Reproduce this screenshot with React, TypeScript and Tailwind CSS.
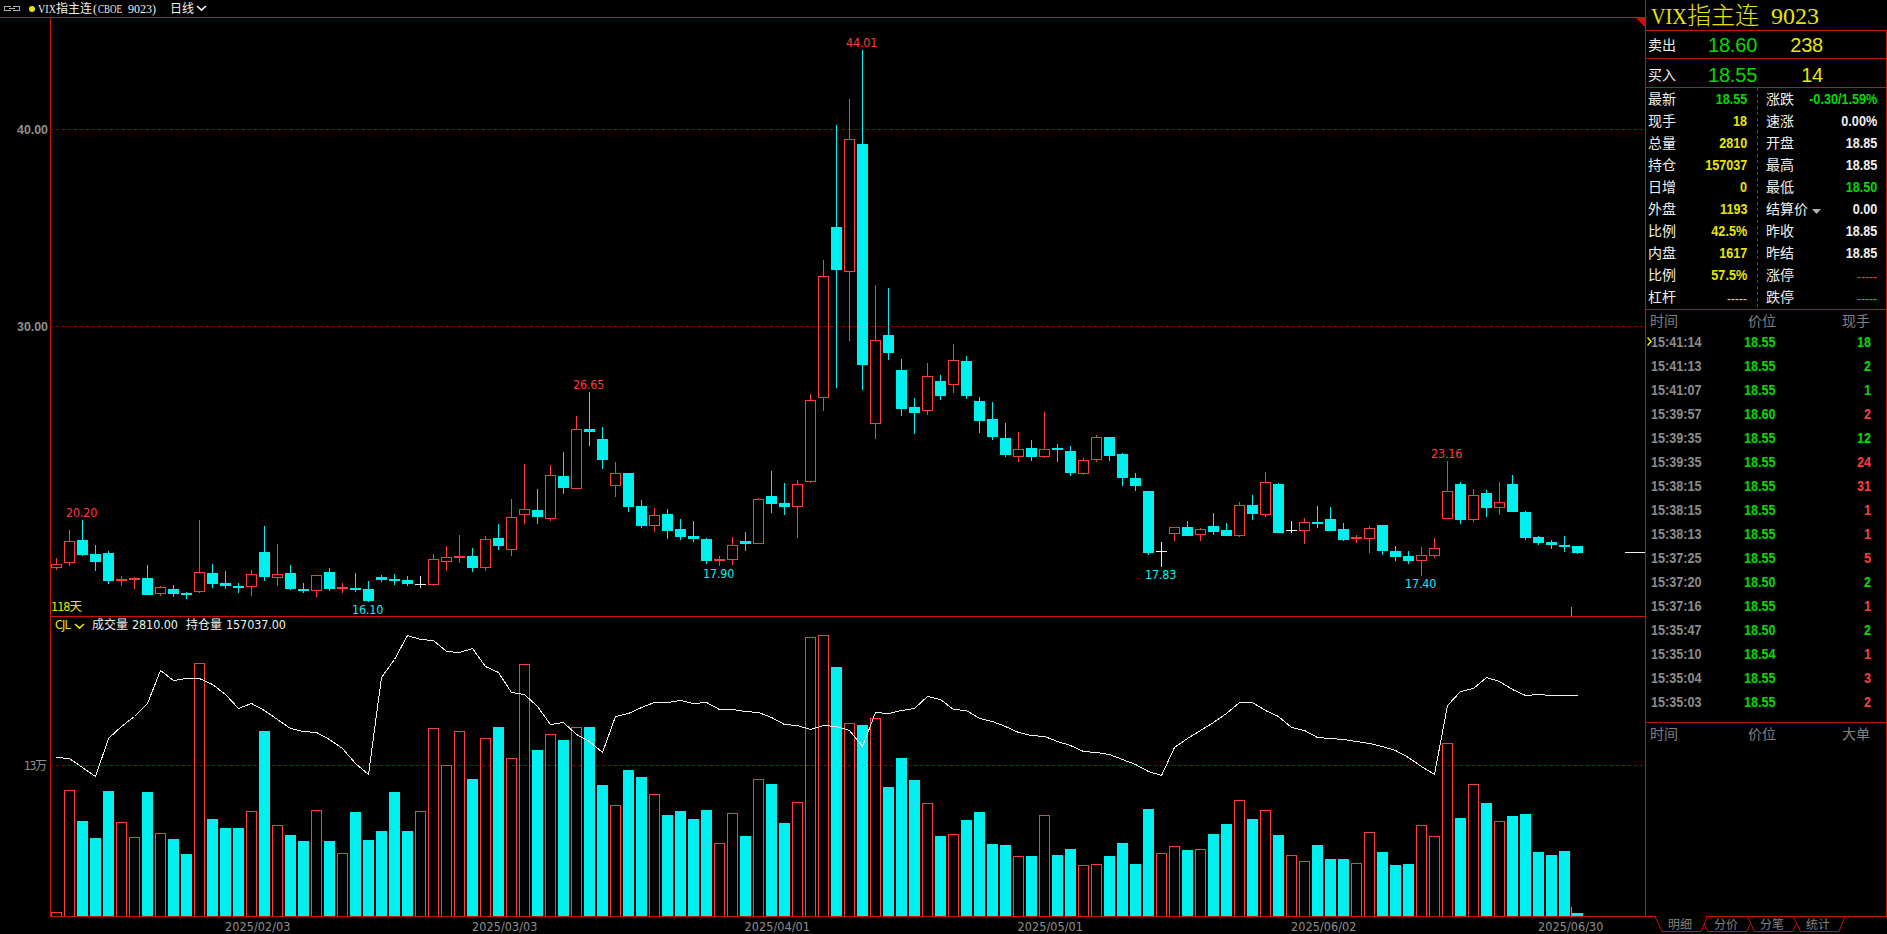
import React from 'react';

type Kind = 'up' | 'down' | 'flat';
// kind, high, body top, body bottom, low, volume top, open interest
type Bar = [Kind, number, number, number, number, number, number];

const bars: Bar[] = [
  ['up', 558, 564, 568, 570, 912, 757],
  ['up', 530, 541, 563, 566, 790, 758],
  ['down', 520, 540, 555, 556, 821, 767],
  ['down', 545, 554, 562, 571, 838, 776],
  ['down', 551, 553, 581, 584, 791, 738],
  ['up', 576, 579, 581, 586, 822, 726],
  ['up', 577, 578, 580, 589, 837, 716],
  ['down', 565, 578, 595, 595, 792, 703],
  ['up', 586, 587, 594, 596, 833, 670],
  ['down', 585, 589, 594, 597, 839, 680],
  ['down', 592, 593, 595, 599, 854, 678],
  ['up', 520, 572, 592, 593, 663, 678],
  ['down', 564, 573, 584, 588, 819, 684],
  ['down', 571, 583, 586, 589, 828, 694],
  ['down', 583, 586, 588, 593, 828, 708],
  ['up', 570, 574, 587, 596, 811, 703],
  ['down', 526, 552, 577, 581, 731, 710],
  ['up', 544, 574, 578, 586, 825, 719],
  ['down', 565, 573, 589, 590, 835, 728],
  ['down', 583, 589, 591, 593, 841, 731],
  ['up', 575, 575, 591, 597, 810, 732],
  ['down', 568, 572, 589, 591, 841, 739],
  ['up', 583, 587, 589, 593, 853, 748],
  ['down', 573, 588, 590, 592, 812, 763],
  ['down', 581, 589, 601, 602, 840, 774],
  ['down', 575, 577, 580, 582, 831, 677],
  ['down', 574, 579, 581, 585, 792, 659],
  ['down', 576, 580, 584, 586, 831, 635],
  ['flat', 576, 584, 585, 588, 811, 639],
  ['up', 554, 559, 585, 586, 728, 640],
  ['up', 546, 557, 562, 571, 765, 651],
  ['up', 535, 556, 558, 563, 731, 652],
  ['down', 548, 556, 568, 572, 779, 648],
  ['up', 536, 539, 568, 571, 738, 666],
  ['down', 524, 538, 546, 550, 727, 672],
  ['up', 499, 517, 550, 556, 758, 692],
  ['up', 464, 509, 515, 524, 664, 694],
  ['down', 489, 510, 517, 524, 750, 706],
  ['up', 465, 475, 519, 521, 734, 724],
  ['down', 452, 476, 488, 494, 740, 722],
  ['up', 416, 429, 489, 489, 727, 734],
  ['down', 392, 429, 432, 446, 727, 741],
  ['down', 427, 439, 460, 469, 785, 752],
  ['up', 462, 473, 486, 497, 805, 716],
  ['down', 473, 473, 507, 512, 770, 713],
  ['down', 500, 506, 526, 528, 777, 707],
  ['up', 508, 515, 526, 532, 794, 702],
  ['down', 509, 514, 531, 539, 815, 702],
  ['down', 519, 529, 537, 540, 811, 700],
  ['down', 521, 536, 539, 542, 819, 703],
  ['down', 538, 539, 561, 564, 810, 702],
  ['up', 556, 559, 561, 566, 843, 709],
  ['up', 537, 545, 560, 565, 813, 709],
  ['down', 532, 541, 544, 551, 836, 711],
  ['up', 498, 499, 544, 544, 779, 712],
  ['down', 471, 496, 504, 513, 784, 717],
  ['down', 483, 503, 507, 515, 823, 724],
  ['up', 480, 484, 507, 538, 802, 725],
  ['up', 394, 400, 482, 483, 637, 729],
  ['up', 260, 276, 398, 411, 635, 725],
  ['down', 125, 227, 270, 388, 667, 726],
  ['up', 99, 139, 272, 341, 723, 730],
  ['down', 50, 144, 365, 390, 725, 746],
  ['up', 285, 340, 424, 439, 718, 712],
  ['down', 288, 335, 353, 360, 787, 713],
  ['down', 359, 370, 409, 416, 758, 710],
  ['down', 398, 407, 413, 434, 780, 708],
  ['up', 363, 376, 411, 415, 803, 696],
  ['down', 375, 381, 396, 400, 836, 699],
  ['up', 344, 360, 385, 393, 834, 709],
  ['down', 356, 361, 396, 399, 820, 710],
  ['down', 397, 401, 421, 433, 812, 718],
  ['down', 402, 419, 437, 440, 844, 721],
  ['down', 423, 438, 455, 457, 845, 726],
  ['up', 432, 449, 457, 462, 856, 732],
  ['down', 440, 448, 457, 461, 856, 735],
  ['up', 412, 449, 457, 458, 815, 736],
  ['down', 444, 448, 450, 462, 855, 741],
  ['down', 446, 451, 473, 476, 849, 745],
  ['up', 458, 460, 474, 475, 865, 751],
  ['up', 435, 437, 460, 462, 864, 752],
  ['down', 437, 437, 456, 461, 856, 754],
  ['down', 453, 454, 478, 486, 843, 759],
  ['down', 473, 478, 486, 491, 864, 764],
  ['down', 491, 491, 553, 555, 809, 771],
  ['flat', 542, 551, 552, 567, 853, 775],
  ['up', 527, 527, 534, 541, 846, 747],
  ['down', 521, 527, 536, 536, 850, 738],
  ['up', 528, 529, 535, 541, 849, 730],
  ['down', 513, 526, 532, 535, 834, 722],
  ['down', 523, 530, 536, 536, 824, 713],
  ['up', 502, 505, 536, 537, 800, 702],
  ['down', 495, 505, 514, 520, 819, 702],
  ['up', 472, 482, 515, 517, 810, 710],
  ['down', 483, 484, 533, 533, 835, 716],
  ['flat', 521, 530, 531, 533, 855, 727],
  ['up', 518, 522, 531, 544, 861, 730],
  ['down', 506, 522, 524, 528, 845, 737],
  ['down', 507, 519, 531, 531, 859, 738],
  ['down', 523, 529, 540, 541, 859, 739],
  ['up', 535, 537, 539, 543, 863, 741],
  ['up', 526, 528, 539, 553, 832, 743],
  ['down', 525, 525, 551, 555, 852, 746],
  ['down', 546, 551, 557, 561, 865, 750],
  ['down', 551, 556, 561, 564, 864, 757],
  ['up', 547, 555, 561, 576, 825, 766],
  ['up', 538, 548, 556, 558, 836, 774],
  ['up', 461, 491, 519, 519, 743, 705],
  ['down', 482, 484, 520, 524, 818, 691],
  ['up', 489, 495, 520, 522, 784, 688],
  ['down', 490, 493, 508, 517, 803, 677],
  ['up', 482, 502, 508, 515, 821, 681],
  ['down', 475, 484, 512, 512, 816, 689],
  ['down', 511, 512, 538, 540, 814, 695],
  ['down', 536, 537, 543, 545, 852, 694],
  ['down', 540, 542, 545, 549, 855, 695],
  ['down', 536, 545, 547, 552, 851, 695],
  ['down', 546, 546, 553, 554, 913, 695],
];

const colors: Record<Kind, string> = {
  up: '#ff3c3c',
  down: '#00f0f0',
  flat: '#f0f0f0',
};

const barX = (i: number) => 56 + i * 13;

const peaks = [
  { x: 82, y: 512, text: '20.20', high: true },
  { x: 368, y: 609, text: '16.10', high: false },
  { x: 589, y: 384, text: '26.65', high: true },
  { x: 719, y: 573, text: '17.90', high: false },
  { x: 862, y: 42, text: '44.01', high: true },
  { x: 1161, y: 574, text: '17.83', high: false },
  { x: 1447, y: 453, text: '23.16', high: true },
  { x: 1421, y: 583, text: '17.40', high: false },
];

const dates = [
  { x: 258, text: '2025/02/03' },
  { x: 505, text: '2025/03/03' },
  { x: 777.5, text: '2025/04/01' },
  { x: 1050.5, text: '2025/05/01' },
  { x: 1324, text: '2025/06/02' },
  { x: 1571, text: '2025/06/30' },
];

const leftQuotes = [
  { label: '最新', value: '18.55', color: 'text-[#00dc00]' },
  { label: '现手', value: '18', color: 'text-[#e6e600]' },
  { label: '总量', value: '2810', color: 'text-[#e6e600]' },
  { label: '持仓', value: '157037', color: 'text-[#e6e600]' },
  { label: '日增', value: '0', color: 'text-[#e6e600]' },
  { label: '外盘', value: '1193', color: 'text-[#e6e600]' },
  { label: '比例', value: '42.5%', color: 'text-[#e6e600]' },
  { label: '内盘', value: '1617', color: 'text-[#e6e600]' },
  { label: '比例', value: '57.5%', color: 'text-[#e6e600]' },
  { label: '杠杆', value: '-----', color: 'text-[#e6e600]' },
];

const rightQuotes = [
  { label: '涨跌', value: '-0.30/1.59%', color: 'text-[#00dc00]' },
  { label: '速涨', value: '0.00%', color: 'text-[#f0f0f0]' },
  { label: '开盘', value: '18.85', color: 'text-[#f0f0f0]' },
  { label: '最高', value: '18.85', color: 'text-[#f0f0f0]' },
  { label: '最低', value: '18.50', color: 'text-[#00dc00]' },
  { label: '结算价', value: '0.00', color: 'text-[#f0f0f0]', menu: true },
  { label: '昨收', value: '18.85', color: 'text-[#f0f0f0]' },
  { label: '昨结', value: '18.85', color: 'text-[#f0f0f0]' },
  { label: '涨停', value: '-----', color: 'text-[#ff3c3c]' },
  { label: '跌停', value: '-----', color: 'text-[#00dc00]' },
];

const trades = [
  { time: '15:41:14', price: '18.55', size: 18, buy: false },
  { time: '15:41:13', price: '18.55', size: 2, buy: false },
  { time: '15:41:07', price: '18.55', size: 1, buy: false },
  { time: '15:39:57', price: '18.60', size: 2, buy: true },
  { time: '15:39:35', price: '18.55', size: 12, buy: false },
  { time: '15:39:35', price: '18.55', size: 24, buy: true },
  { time: '15:38:15', price: '18.55', size: 31, buy: true },
  { time: '15:38:15', price: '18.55', size: 1, buy: true },
  { time: '15:38:13', price: '18.55', size: 1, buy: true },
  { time: '15:37:25', price: '18.55', size: 5, buy: true },
  { time: '15:37:20', price: '18.50', size: 2, buy: false },
  { time: '15:37:16', price: '18.55', size: 1, buy: true },
  { time: '15:35:47', price: '18.50', size: 2, buy: false },
  { time: '15:35:10', price: '18.54', size: 1, buy: true },
  { time: '15:35:04', price: '18.55', size: 3, buy: true },
  { time: '15:35:03', price: '18.55', size: 2, buy: true },
];

const chartFont = "font-['DejaVu_Sans_Condensed','DejaVu_Sans','Noto_Sans_CJK_SC',sans-serif] [font-stretch:condensed]";
const numFont = "inline-block font-['Liberation_Sans','Noto_Sans_CJK_SC',sans-serif] text-[14.5px] leading-5 font-bold scale-x-[0.87]";

function Box({ x, top, bottom, kind }: { x: number; top: number; bottom: number; kind: Kind }) {
  if (kind === 'up' && bottom - top > 2) {
    return (
      <rect x={x - 4.5} y={top + 0.5} width={10} height={bottom - top - 1} fill="none" stroke={colors.up} />
    );
  }
  return <rect x={x - 5} y={top} width={11} height={bottom - top} fill={colors[kind]} />;
}

function GridLine({ y }: { y: number }) {
  return <line x1={50} x2={1645} y1={y + 0.5} y2={y + 0.5} stroke="#8c0000" strokeDasharray="3 3" />;
}

function Chevron({ className }: { className: string }) {
  return (
    <svg width="11" height="7" viewBox="0 0 11 7" className={className} fill="none" stroke="currentColor" strokeWidth="1.6">
      <path d="M1 1 L5.5 5.2 L10 1" />
    </svg>
  );
}

function PriceChart() {
  return (
    <svg width="1645" height="599" viewBox="0 17 1645 599" className={`block ${chartFont}`} shapeRendering="crispEdges">
      <rect x="0" y="17" width="1645" height="1" fill="#c81408" />
      <rect x="50" y="17" width="1" height="599" fill="#c81408" />
      <GridLine y={129} />
      <GridLine y={326} />
      {bars.map(([kind, high, top, bottom, low], i) => (
        <g key={i}>
          <rect x={barX(i)} y={high} width={1} height={top - high} fill={colors[kind]} />
          <rect x={barX(i)} y={bottom} width={1} height={low - bottom} fill={colors[kind]} />
          <Box x={barX(i)} top={top} bottom={bottom} kind={kind} />
        </g>
      ))}
      <rect x="1625" y="552" width="20" height="1" fill="#f0f0f0" />
      <rect x="1571" y="607" width="1" height="9" fill="#909090" />
      <path d="M1635 17 H1645 V27 Z" fill="#c81408" shapeRendering="auto" />
      {peaks.map((p) => (
        <text
          key={p.text}
          x={p.x - 16}
          y={p.y + 4.5}
          textLength={31.5}
          fontSize="12.5"
          fill={p.high ? '#ff3c3c' : '#00f0f0'}
        >
          {p.text}
        </text>
      ))}
      <g fill="#909090" fontSize="12.5" fontWeight="bold" className="font-['Liberation_Sans',sans-serif]">
        <text x="17" y="133.5" textLength="31" lengthAdjust="spacingAndGlyphs">40.00</text>
        <text x="17" y="330.5" textLength="31" lengthAdjust="spacingAndGlyphs">30.00</text>
      </g>
      <text x="51" y="611" fontSize="12.5" fill="#e6e600" textLength="31">118天</text>
    </svg>
  );
}

function VolumeChart() {
  const line = bars.map((b, i) => `${barX(i) + 0.5},${b[6] + 0.5}`).join(' ');
  return (
    <div className="relative">
      <svg width="1645" height="301" viewBox="0 616 1645 301" className="block" shapeRendering="crispEdges">
        <rect x="50" y="616" width="1595" height="1" fill="#c81408" />
        <rect x="50" y="616" width="1" height="301" fill="#c81408" />
        <GridLine y={765} />
        {bars.map((b, i) => (
          <Box key={i} x={barX(i)} top={b[5]} bottom={917} kind={b[0] === 'down' ? 'down' : 'up'} />
        ))}
        <polyline points={line} fill="none" stroke="#f0f0f0" />
        <rect x="50" y="916" width="1595" height="1" fill="#c81408" />
        <rect x="1571" y="907" width="1" height="10" fill="#909090" />
        <text x="24" y="769.5" fontSize="12" fill="#909090" textLength="23" className={chartFont}>
          13万
        </text>
      </svg>
      <div className={`absolute top-[1px] left-[55px] flex h-4 items-center text-[12.5px] leading-4 text-[#f0f0f0] ${chartFont}`}>
        <span className="w-[20px] tracking-[-0.8px] text-[#e6e600]">CJL</span>
        <Chevron className="mt-0.5 -ml-px mr-[7px] text-[#e6e600]" />
        <span className="w-10 text-[12px]">成交量</span>
        <span className="w-[54px] tracking-[-0.1px]">2810.00</span>
        <span className="w-10 text-[12px]">持仓量</span>
        <span className="tracking-[-0.1px]">157037.00</span>
      </div>
    </div>
  );
}

function QuoteColumn({ rows, className }: { rows: { label: string; value: string; color: string; menu?: boolean }[]; className: string }) {
  return (
    <ul className={className}>
      {rows.map((row, i) => (
        <li key={i} className="flex h-[22px] items-center justify-between">
          <span className="flex items-center pb-0.5 text-sm leading-5 text-[#f0f0f0]">
            {row.label}
            {row.menu && (
              <svg width="9" height="5" viewBox="0 0 9 5" className="mt-1.5 ml-1">
                <path d="M0 0 H9 L4.5 5 Z" fill="#b0b0b0" />
              </svg>
            )}
          </span>
          {row.value === '-----' ? (
            <span className={`mt-1 font-['Liberation_Sans',sans-serif] text-xs ${row.color}`}>{row.value}</span>
          ) : (
            <span className={`origin-right ${numFont} ${row.color}`}>{row.value}</span>
          )}
        </li>
      ))}
    </ul>
  );
}

function ListHeader({ last }: { last: string }) {
  return (
    <div className="flex h-5 items-center pl-1 text-sm leading-5 text-[#808080]">
      <span className="w-[98px]">时间</span>
      <span className="w-[94px]">价位</span>
      <span>{last}</span>
    </div>
  );
}

function Sidebar() {
  return (
    <aside className="flex w-[242px] flex-col">
      <div className="flex h-[917px] flex-col border-l border-[#c81408]">
        <h1 className="flex h-[30px] items-center pt-px pl-[5px] text-[24px] leading-none font-light whitespace-pre text-[#e6e600] font-['Liberation_Serif','Noto_Sans_CJK_SC',serif]">
          <span className="inline-block w-9 origin-left scale-x-[0.84]">VIX</span>
          <span>指主连</span>
          <span className="ml-3">9023</span>
        </h1>
        <div className="flex grow flex-col border-t border-r border-b border-[#c81408]">
          {[
            { label: '卖出', price: '18.60', size: '238' },
            { label: '买入', price: '18.55', size: '14' },
          ].map((row, i) => (
            <div
              key={row.label}
              className={`flex items-center border-b border-[#c81408] pl-0.5 ${i === 0 ? 'h-7' : 'h-[29px] pt-[3px]'}`}
            >
              <span className="w-[60px] pb-0.5 text-sm text-[#f0f0f0]">{row.label}</span>
              <span className="w-[52px] text-[20px] tracking-[-0.2px] text-[#00dc00] font-['Liberation_Sans',sans-serif]">{row.price}</span>
              <span className="w-[63px] text-right text-[20px] tracking-[-0.2px] text-[#e6e600] font-['Liberation_Sans',sans-serif]">{row.size}</span>
            </div>
          ))}

          <div className="flex h-[222px] border-b border-[#c81408]">
            <QuoteColumn rows={leftQuotes} className="w-[101px] pl-0.5" />
            <svg width="1" height="219" className="ml-[10px]" shapeRendering="crispEdges">
              <line x1="0.5" x2="0.5" y1="0" y2="219" stroke="#c81408" strokeDasharray="3 3" />
            </svg>
            <QuoteColumn rows={rightQuotes} className="ml-2 w-[111px]" />
          </div>

          <div className="h-[413px] border-b border-[#c81408]">
            <ListHeader last="现手" />
            <ul>
              {trades.map((trade, i) => (
                <li key={i} className="relative flex h-6 items-center pl-[5px]">
                  {i === 0 && (
                    <svg width="5" height="9" viewBox="0 0 5 9" className="absolute top-[7px] left-[1px]" fill="none" stroke="#f0f000" strokeWidth="1.4">
                      <path d="M0.5 0.5 L4 4.5 L0.5 8.5" />
                    </svg>
                  )}
                  <span className={`w-[93px] origin-left text-[#8c8c8c] ${numFont}`}>{trade.time}</span>
                  <span className={`w-[33px] origin-left text-[#00dc00] ${numFont}`}>{trade.price}</span>
                  <span className={`w-[94px] origin-right text-right ${numFont} ${trade.buy ? 'text-[#ff3c3c]' : 'text-[#00dc00]'}`}>
                    {trade.size}
                  </span>
                </li>
              ))}
            </ul>
          </div>
          <ListHeader last="大单" />
        </div>
      </div>
      <Tabs />
    </aside>
  );
}

function Tabs() {
  return (
    <nav className="relative h-[17px]">
      <svg width="242" height="17" viewBox="0 0 242 17" className="absolute -top-px left-0" fill="none" stroke="#c81408">
        <path d="M11 0.5 H61" stroke="#000" />
        <path d="M10 0.5 L17 15.5 H56 L62.5 0.5" />
        <path d="M59 8 L63 15.5 H102 L105 8" />
        <path d="M102.5 0.5 L109.5 15.5 H148 L151 8" />
        <path d="M148.5 0.5 L155.5 15.5 H194 L200 0.5" />
      </svg>
      <div className="relative -mt-px flex h-[15px] items-center pl-3 text-xs text-[#808080]">
        {['明细', '分价', '分笔', '统计'].map((tab) => (
          <span key={tab} className="w-[46px] text-center">
            {tab}
          </span>
        ))}
      </div>
    </nav>
  );
}

function TitleBar() {
  return (
    <header className="flex h-[17px] items-center pl-1 text-xs leading-none text-[#f0f0f0] font-['Liberation_Serif','Noto_Sans_CJK_SC',serif]">
      <svg width="16" height="5" viewBox="0 0 16 5" fill="none" stroke="#b0b0b0" shapeRendering="crispEdges">
        <path d="M6.5 1 V0.5 H0.5 V4.5 H6.5 V4 M9.5 1 V0.5 H15.5 V4.5 H9.5 V4 M5 2.5 H11" />
      </svg>
      <span className="mr-[3px] ml-[9px] h-1.5 w-1.5 rounded-full bg-[#e6e600]" />
      <span className="inline-block w-[18px] origin-left scale-x-[0.84]">VIX</span>
      <span>指主连</span>
      <span className="ml-px w-[5px]">(</span>
      <span className="inline-block w-6 origin-left scale-x-75">CBOE</span>
      <span className="ml-1.5">9023</span>
      <span className="w-[18px]">)</span>
      <span>日线</span>
      <Chevron className="ml-0.5" />
    </header>
  );
}

export default function App() {
  return (
    <div className="flex h-[934px] w-[1887px] overflow-hidden bg-black font-['Noto_Sans_CJK_SC',sans-serif]">
      <main className="w-[1645px]">
        <TitleBar />
        <PriceChart />
        <VolumeChart />
        <svg width="1645" height="17" className={`block ${chartFont}`} fill="#909090" fontSize="12.5">
          {dates.map((d) => (
            <text key={d.text} x={d.x - 33} y="13.5" textLength={65.5}>
              {d.text}
            </text>
          ))}
        </svg>
      </main>
      <Sidebar />
    </div>
  );
}
